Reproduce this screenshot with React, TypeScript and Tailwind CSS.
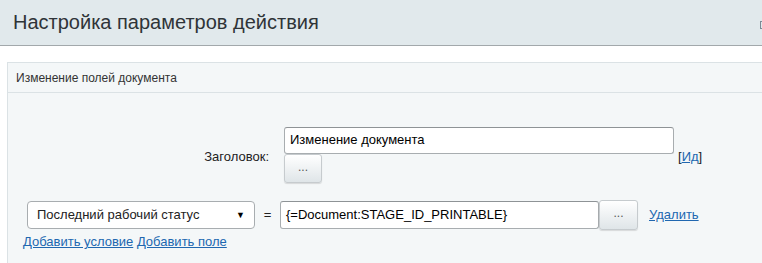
import React from "react";

function DotsButton({ className = "" }: { className?: string }) {
  return (
    <button
      type="button"
      className={`flex items-center justify-center rounded-[3px] border border-[#c6cbce] bg-[linear-gradient(to_bottom,#ffffff,#dfe5e8)] pb-[4px] text-[12px] leading-none text-[#555] shadow-[0_1px_1px_rgba(0,0,0,0.12)] ${className}`}
    >
      ...
    </button>
  );
}

function TextBox({ value, className = "" }: { value: string; className?: string }) {
  return (
    <div
      className={`flex items-center rounded-[3px] border border-[#a8adb0] border-t-[#8e9396] bg-white pl-[5px] text-[13px] text-black ${className}`}
    >
      {value}
    </div>
  );
}

export default function App() {
  return (
    <div className="h-[263px] w-[762px] overflow-hidden bg-white font-['Liberation_Sans',Arial,sans-serif]">
      {/* шапка диалога */}
      <div className="flex h-[46px] items-center justify-between border-b border-[#a2a8ab] bg-[#e1e9ec] pl-[13px]">
        <h1 className="pb-[2px] text-[20px] text-[#2f3438]">Настройка параметров действия</h1>
        <span className="mr-[-6px] mt-[4px] h-[8px] w-[8px] border border-[#7d8a96]" />
      </div>

      <div className="pl-[7px] pt-[16px]">
        <div className="mr-[-10px] border border-[#dbe2e5] bg-[#f4f7f8]">
          <div className="flex h-[30px] items-center border-b border-[#dbe2e5] pl-[8px] text-[12px] text-[#333]">
            Изменение полей документа
          </div>

          <div className="pb-[20px] pt-[34px]">
            {/* Заголовок */}
            <div className="flex items-center">
              <div className="w-[261px] pt-[4px] text-right text-[13px] text-[#222]">Заголовок:</div>
              <div className="ml-[15px] flex items-center">
                <div className="flex flex-col">
                  <TextBox value="Изменение документа" className="h-[27px] w-[390px] pb-[2px]" />
                  <DotsButton className="h-[29px] w-[38px]" />
                </div>
                <span className="ml-[4px] mt-[4px] text-[13px] text-[#222]">
                  [<a href="#" className="text-[#2067b0] underline">Ид</a>]
                </span>
              </div>
            </div>

            {/* условие */}
            <div className="mt-[17px] flex items-center pl-[19px]">
              <div className="relative flex h-[28px] w-[228px] items-center rounded-[4px] border border-[#a8adb0] bg-white pl-[9px] text-[13px] text-[#222]">
                Последний рабочий статус
                <span className="absolute right-[9px] top-[7px] text-[9px] text-black">▼</span>
              </div>
              <span className="ml-[6px] w-[13px] text-center text-[13px] text-[#222]">=</span>
              <TextBox value="{=Document:STAGE_ID_PRINTABLE}" className="ml-[6px] h-[28px] w-[319px]" />
              <DotsButton className="h-[30px] w-[39px]" />
              <a href="#" className="ml-[11px] text-[13px] text-[#2067b0] underline">
                Удалить
              </a>
            </div>

            <div className="mt-[2px] pl-[15px] text-[13px] text-[#2067b0]">
              <a href="#" className="underline">Добавить условие</a>{" "}
              <a href="#" className="underline">Добавить поле</a>
            </div>
          </div>
        </div>
      </div>
    </div>
  );
}
